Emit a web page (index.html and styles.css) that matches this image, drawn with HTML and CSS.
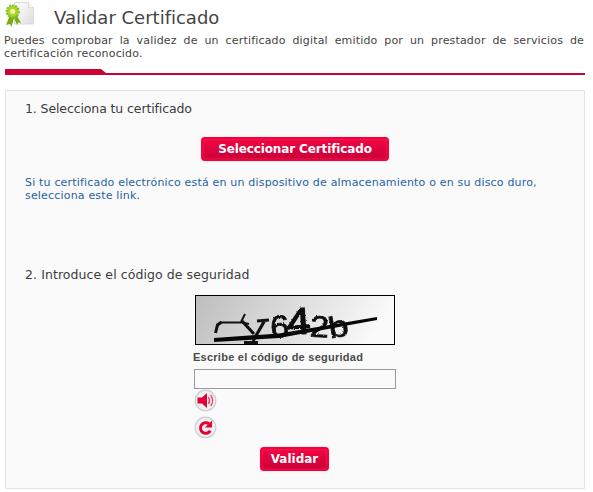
FILE: index.html
```html
<!DOCTYPE html>
<html lang="es">
<head>
<meta charset="utf-8">
<title>Validar Certificado</title>
<link rel="stylesheet" href="styles.css">
</head>
<body>
<header class="head">
  <svg class="cert" width="31" height="28" viewBox="0 0 31 28">
    <defs><linearGradient id="pg" x1="0" y1="0" x2="1" y2="1"><stop offset="0" stop-color="#fff"/><stop offset="1" stop-color="#dedede"/></linearGradient></defs>
    <path d="M9.500 2.500h14l5 5v16.500h-19z" fill="url(#pg)" stroke="#dadada"/>
    <path d="M23.500 2.500v5h5" fill="#fafafa" stroke="#dadada"/>
    <path d="M5 15L1 25l4-1 1.500 3L9 18l3 7 1-2.500 3 .500-5-9z" fill="#79ac10"/>
    <circle cx="7.700" cy="11.500" r="6" fill="#a4d52c" stroke="#8ac422" stroke-width="2.200" stroke-dasharray="2 1"/>
    <circle cx="7.700" cy="11.500" r="4.300" fill="#a7d936"/>
    <circle cx="7.700" cy="11.500" r="2.500" fill="#fff09a"/>
  </svg>
  <h1 class="title">Validar Certificado</h1>
</header>
<p class="intro">Puedes comprobar la validez de un certificado digital emitido por un prestador de servicios de certificación reconocido.</p>
<div class="rule"></div>
<main class="panel">
  <h2 class="step step-one">1. Selecciona tu certificado</h2>
  <button class="btn btn-select">Seleccionar Certificado</button>
  <a class="link">Si tu certificado electrónico está en un dispositivo de almacenamiento o en su disco duro,<br>selecciona este link.</a>
  <h2 class="step step-two">2. Introduce el código de seguridad</h2>
  <div class="form">
    <svg class="captcha" width="200" height="50" viewBox="0 0 200 50">
      <defs>
        <linearGradient id="cg" x1="0" y1="0" x2="1" y2="0.150"><stop offset="0" stop-color="#bdbdbd"/><stop offset="1" stop-color="#fafafa"/></linearGradient>
        <filter id="rough" x="-10%" y="-10%" width="120%" height="120%"><feTurbulence type="fractalNoise" baseFrequency="0.7" numOctaves="2" seed="4"/><feDisplacementMap in="SourceGraphic" scale="2.500" xChannelSelector="R" yChannelSelector="G"/><feGaussianBlur stdDeviation="0.350"/></filter>
      </defs>
      <rect x=".5" y=".5" width="199" height="49" fill="url(#cg)" stroke="#000"/>
      <path d="M20.500 38l2-8 4-3" fill="none" stroke="#111" stroke-width="3"/>
      <path d="M25 27.500h22l7 1.500M46 27l4-8" fill="none" stroke="#111" stroke-width="1.900"/>
      <path d="M47 26l12 13M62 26l12-1M70 25L58 46M49 47.500h14" fill="none" stroke="#111" stroke-width="3.200"/>
      <g class="code" filter="url(#rough)">
        <text x="75" y="42" font-size="31" textLength="19" lengthAdjust="spacingAndGlyphs" transform="rotate(-3 84 30)">6</text>
        <text x="92" y="39" font-size="37" stroke-width="1.500" textLength="23" lengthAdjust="spacingAndGlyphs" transform="rotate(-4 103 26)">4</text>
        <text x="115" y="42" font-size="30" textLength="19" lengthAdjust="spacingAndGlyphs" transform="rotate(3 124 30)">2</text>
        <text x="133" y="42" font-size="30" textLength="20" lengthAdjust="spacingAndGlyphs" transform="rotate(-10 143 30)">b</text>
      </g>
      <path d="M19 43l65-4.500v4.500l-65 4zM84 38.500l98-16.500v3L84 43z" fill="#080808"/>
    </svg>
    <label class="label" for="code">Escribe el código de seguridad</label>
    <input class="field" id="code" type="text">
    <svg class="icon" width="23" height="23" viewBox="0 0 23 23">
      <circle cx="11.500" cy="11.500" r="10.300" fill="#f0f0f0" stroke="#cfcfcf" stroke-width="1.200"/>
      <path d="M3.500 8.500h4.500l5-4.500v15l-5-4.500h-4.500z" fill="#e20035"/>
      <path d="M14.500 8q2 3.500 0 7M16.700 6q4 5.500 0 11" fill="none" stroke="#e83b62" stroke-width="1.300"/>
    </svg>
    <svg class="icon icon-reload" width="23" height="23" viewBox="0 0 23 23">
      <circle cx="11.500" cy="11.500" r="10.300" fill="#f0f0f0" stroke="#cfcfcf" stroke-width="1.200"/>
      <path d="M16.300 14.800a5.300 5.300 0 1 1-1.300-7" fill="none" stroke="#e20035" stroke-width="3"/>
      <path d="M18 4.500v7h-7z" fill="#e20035"/>
    </svg>
  </div>
  <button class="btn btn-validate">Validar</button>
</main>
</body>
</html>
```
FILE: styles.css
```css
* { box-sizing: border-box; }
body {
  margin: 0;
  padding: 0 8px 0 5px;
  width: 593px;
  height: 492px;
  overflow: hidden;
  background: #fff;
  color: #444;
  font-family: Verdana, "DejaVu Sans", sans-serif;
}
.head { display: flex; height: 34px; }
.cert { flex: none; }
.title {
  margin: 7px 0 0 18px;
  font-size: 18px;
  font-weight: 400;
  line-height: 21px;
  white-space: nowrap;
}
.intro {
  margin: 0 1px 0 -1px;
  height: 35px;
  font-size: 11px;
  line-height: 13px;
  letter-spacing: .17px;
  text-align: justify;
}
.rule {
  height: 6px;
  background: #cc0035;
  clip-path: polygon(0 0, 96px 0, 101px 4px, 100% 4px, 100% 100%, 0 100%);
}
.panel {
  display: flex;
  flex-direction: column;
  height: 399px;
  margin-top: 15px;
  padding: 9px 19px 0;
  border: 1px solid #e3e3e3;
  background: #fafafa;
}
.step {
  flex: none;
  margin: 0;
  font-size: 12.500px;
  font-weight: 400;
  line-height: 18px;
  color: #3c3c3c;
  white-space: nowrap;
}
.step-one { letter-spacing: -.11px; }
.step-two { margin-top: 12px; letter-spacing: .08px; }
.btn {
  flex: none;
  height: 24px;
  padding: 0 0 1px;
  border: 2px solid #f5003f;
  border-radius: 4px;
  background: linear-gradient(#f20643, #c90038);
  box-shadow: inset 0 0 2px #fa3564, 0 0 1px #f795ad;
  color: #fff;
  font: bold 12px Verdana, "DejaVu Sans", sans-serif;
  white-space: nowrap;
}
.btn-select { width: 188px; margin: 19px 0 0 176px; letter-spacing: -.12px; }
.link {
  flex: none;
  margin-top: 15px;
  height: 78px;
  font-size: 11px;
  line-height: 13px;
  letter-spacing: .18px;
  color: #2862a0;
  white-space: nowrap;
}
.form {
  display: flex;
  flex-direction: column;
  align-items: flex-start;
  margin: 11px 0 0 169px;
}
.captcha { margin-left: 1px; }
.code {
  font-family: "Liberation Sans", sans-serif;
  fill: #111;
  stroke: #111;
  stroke-width: .7px;
}
.label {
  margin-left: -1px;
  height: 24px;
  font: bold 11px/24px "Liberation Sans", Arial, sans-serif;
  letter-spacing: .25px;
  color: #4a4a4a;
  white-space: nowrap;
}
.field {
  width: 202px;
  height: 20px;
  border: 1px solid #999;
  background: #fafafa;
}
.icon-reload { margin-top: 4px; }
.btn-validate { width: 69px; margin: 8px 0 0 235px; }
```
